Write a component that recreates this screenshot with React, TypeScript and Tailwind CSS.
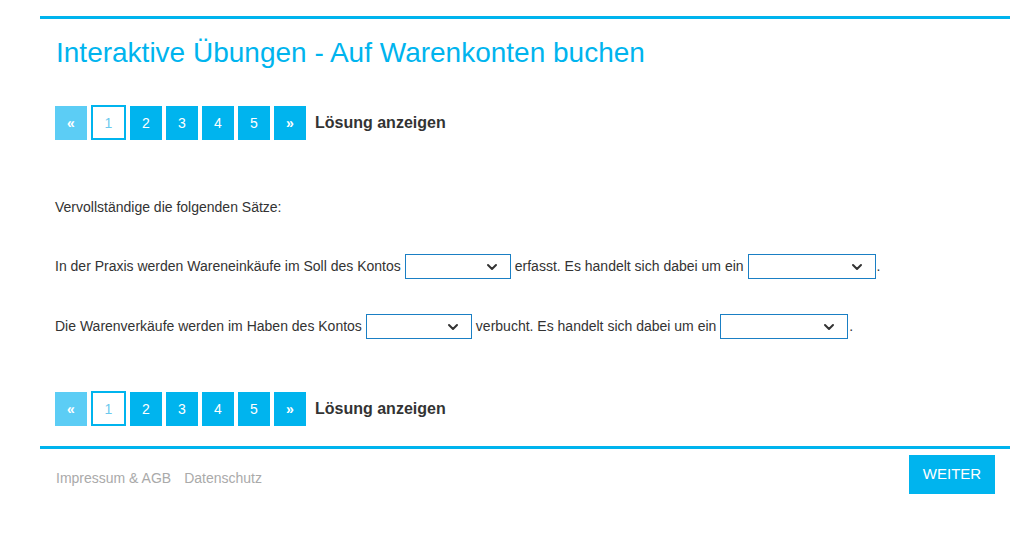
import { ChevronDown } from 'lucide-react';

const seiten = ['1', '2', '3', '4', '5'];

function Pager() {
  return (
    <div className="flex items-center gap-[4px]">
      <span className="w-[32px] h-[34px] flex items-center justify-center bg-[#5ccdf5] text-white text-sm font-bold">«</span>
      {seiten.map((s) =>
        s === '1' ? (
          <span key={s} className="w-[35px] h-[35px] flex items-center justify-center border-2 border-[#00b4ee] bg-white text-[#6cc9ee] text-sm">
            {s}
          </span>
        ) : (
          <span key={s} className="w-[32px] h-[34px] flex items-center justify-center bg-[#00b4ee] text-white text-sm">
            {s}
          </span>
        )
      )}
      <span className="w-[32px] h-[34px] flex items-center justify-center bg-[#00b4ee] text-white text-sm font-bold">»</span>
      <span className="ml-[5px] text-[16px] font-bold text-[#333]">Lösung anzeigen</span>
    </div>
  );
}

function Auswahl({ w }: { w: string }) {
  return (
    <span className={`inline-flex items-center justify-end h-[25px] border border-[#1a7fc4] bg-white pr-[10px] align-middle ${w}`}>
      <ChevronDown size={16} strokeWidth={3} className="text-[#333]" />
    </span>
  );
}

export default function App() {
  return (
    <div className="min-h-screen bg-white font-['Liberation_Sans',Arial,sans-serif] pt-[16px]">
      <div className="w-[970px] ml-[40px]">
        <div className="h-[3px] bg-[#00b4ee]" />
        <div className="px-[15px]">
          <h1 className="text-[28px] text-[#00b4ee] pt-[19px] leading-[30px] pl-[1px]">
            Interaktive Übungen - Auf Warenkonten buchen
          </h1>
          <div className="mt-[37px]">
            <Pager />
          </div>

          <p className="mt-[57px] text-[14px] text-[#333]">Vervollständige die folgenden Sätze:</p>

          <p className="mt-[36px] text-[14px] text-[#333] flex items-center gap-[4px]">
            In der Praxis werden Wareneinkäufe im Soll des Kontos
            <Auswahl w="w-[106px]" />
            erfasst. Es handelt sich dabei um ein
            <Auswahl w="w-[128px]" />
            <span className="-ml-[3px]">.</span>
          </p>

          <p className="mt-[35px] text-[14px] text-[#333] flex items-center gap-[4px]">
            Die Warenverkäufe werden im Haben des Kontos
            <Auswahl w="w-[106px]" />
            verbucht. Es handelt sich dabei um ein
            <Auswahl w="w-[128px]" />
            <span className="-ml-[3px]">.</span>
          </p>

          <div className="mt-[52px]">
            <Pager />
          </div>
        </div>
        <div className="h-[3px] bg-[#00b4ee] mt-[20px]" />
        <div className="flex items-start justify-between pl-[16px] pr-[15px] pt-[6px]">
          <div className="flex gap-[13px] text-[14px] text-[#aaa] mt-[13px]">
            <span>Impressum &amp; AGB</span>
            <span>Datenschutz</span>
          </div>
          <span className="w-[86px] h-[39px] flex items-center justify-center bg-[#00b4ee] text-white text-[15px]">
            WEITER
          </span>
        </div>
      </div>
    </div>
  );
}
